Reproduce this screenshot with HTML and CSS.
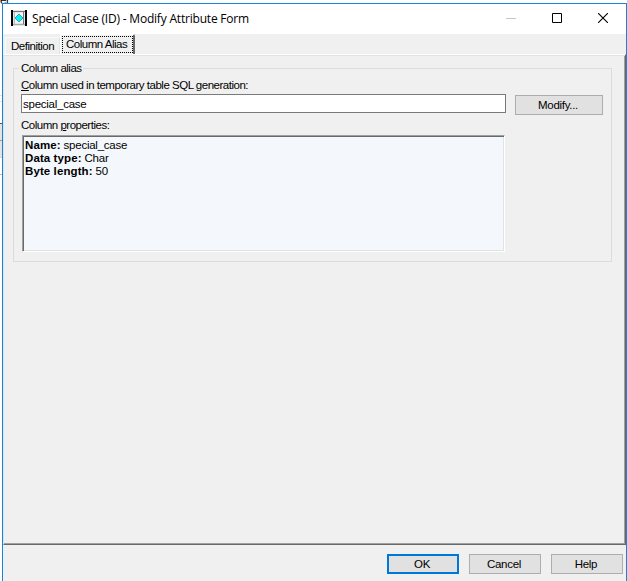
FILE: index.html
```html
<!DOCTYPE html>
<html lang="en">
<head>
<meta charset="utf-8">
<title>Special Case (ID) - Modify Attribute Form</title>
<link rel="stylesheet" href="styles.css">
</head>
<body>
<div class="backdrop"><span class="backdrop-text">er</span></div>
<main class="window">
  <header class="titlebar">
    <svg class="app-icon" width="16" height="16" viewBox="0 0 16 16" shape-rendering="crispEdges">
      <path fill="#e4e4e4" d="M2 0h12v16H2z"/>
      <path fill="#f4f4f4" d="M4 3h8v10H4z"/>
      <path fill="#000" d="M0 0h2v16H0zM14 0h2v16h-2z"/>
      <path fill="#777" d="M2 1h12v1H2zM12 2h1v12h-1z"/>
      <path fill="#aaa" d="M2 14h12v1H2z"/>
      <path fill="#b9c0c0" d="M3 2h1v12H3z"/>
      <path fill="#36a5ab" d="M7 4h2v1h1v1h1v1h1v2h-1v1h-1v1H9v1H7v-1H6v-1H5V9H4V7h1V6h1V5h1z"/>
      <path fill="#00f4ff" d="M7 5h2v1h1v1h1v2h-1v1H9v1H7v-1H6V9H5V7h1V6h1z"/>
    </svg>
    <h1 class="title">Special Case (ID) - Modify Attribute Form</h1>
    <div class="controls">
      <svg width="10" height="10" viewBox="0 0 10 10"><path d="M0 5.5h10" stroke="#c6c6c6"/></svg>
      <svg width="10" height="10" viewBox="0 0 10 10"><path d="M.5.5h9v9h-9z" fill="none" stroke="#000"/></svg>
      <svg width="10" height="10" viewBox="0 0 10 10"><path d="M0 0l10 10M10 0L0 10" fill="none" stroke="#000" stroke-width="1.1"/></svg>
    </div>
  </header>
  <nav class="tabs">
    <div class="tab">Definition</div>
    <div class="tab active"><span class="focus">Column Alias</span></div>
  </nav>
  <section class="panel">
    <div class="group">
      <div class="legend">Column alias</div>
      <label class="label first" for="alias"><u>C</u>olumn used in temporary table SQL generation:</label>
      <div class="row">
        <input id="alias" class="field" value="special_case">
        <button class="button modify">Modify...</button>
      </div>
      <div class="label second">Column <u>p</u>roperties:</div>
      <div class="properties">
        <div><b>Name:</b> special_case</div>
        <div><b>Data type:</b> Char</div>
        <div><b>Byte length:</b> 50</div>
      </div>
    </div>
  </section>
  <footer class="footer">
    <button class="button default">OK</button>
    <button class="button">Cancel</button>
    <button class="button">Help</button>
  </footer>
</main>
</body>
</html>
```
FILE: styles.css
```css
* { box-sizing: border-box; }
body {
  margin: 0;
  width: 627px;
  height: 581px;
  overflow: hidden;
  position: relative;
  padding: 3px 0 0 2px;
  background: #fff;
  color: #000;
  font: 11.5px/13px "Liberation Sans", Arial, sans-serif;
  letter-spacing: -0.49px;
}
.backdrop {
  position: absolute;
  inset: 0;
  background: linear-gradient(#d5e2ef, #d5e2ef) 0 95px / 2px 1px no-repeat,
    linear-gradient(#d5e2ef, #d5e2ef) 0 101px / 2px 1px no-repeat,
    linear-gradient(#555, #555) 0 123px / 2px 1px no-repeat,
    linear-gradient(#999, #999) 0 140px / 2px 1px no-repeat,
    linear-gradient(#c8d8e8, #c8d8e8) 0 157px / 2px 1px no-repeat,
    linear-gradient(#bbb, #bbb) 0 174px / 2px 1px no-repeat,
    linear-gradient(#e4e4e4, #e4e4e4) 0 124px / 2px 33px no-repeat, #fff;
}
.backdrop-text { position: absolute; left: 0; top: -6px; }
.window {
  position: relative;
  display: flex;
  flex-direction: column;
  width: 625px;
  height: 578px;
  border: 1px solid #1883d7;
  border-bottom: 0;
  background: #f0f0f0;
}
.titlebar {
  display: flex;
  align-items: center;
  height: 30px;
  padding: 0 18px 0 8px;
  background: #fff;
}
.app-icon { position: relative; top: -1px; margin-right: 5px; }
.title {
  margin: 0;
  font: 12px/16px "Open Sans", "Noto Sans", sans-serif;
  letter-spacing: -0.2px;
}
.controls { position: relative; top: -1px; display: flex; gap: 36px; margin-left: auto; }
.controls svg { display: block; }
.tabs { display: flex; align-items: flex-end; height: 20px; padding-left: 2px; }
.tab {
  width: 55px;
  height: 17px;
  padding: 2px 0 0 5px;
  border: 1px solid #f9f9f9;
  border-right-color: #e3e3e3;
  border-bottom: 0;
  border-radius: 2px 2px 0 0;
  white-space: nowrap;
}
.tab.active {
  position: relative;
  width: 75px;
  height: 20px;
  padding: 1px 0 0 1px;
  border-color: #fff;
  border-right: 2px solid #696969;
}
.focus { display: block; width: 71px; height: 17px; padding: 1px 0 0 3px; border: 1px dotted #000; }
.panel {
  height: 491px;
  padding: 13px 13px 0 9px;
  border: 1px solid;
  border-color: #fff #696969 #696969 #e3e3e3;
  box-shadow: inset 0 1px #e3e3e3, inset -1px -1px #a0a0a0;
}
.group { height: 194px; padding: 0 8px 0 7px; border: 1px solid #dcdcdc; }
.legend { width: 64px; height: 13px; margin: -7px 0 0 -2px; padding-left: 2px; background: #f0f0f0; white-space: nowrap; }
.label { height: 13px; white-space: nowrap; }
.first { display: block; margin-top: 4px; }
.row { display: flex; margin-top: 2px; gap: 9px; align-items: flex-start; }
.field {
  width: 485px;
  height: 19px;
  padding: 0 0 0 1px;
  border: 1px solid #7a7a7a;
  background: #fff;
  outline: 0;
  font: inherit;
  letter-spacing: -0.25px;
}
.button {
  flex: none;
  width: 72px;
  height: 20px;
  padding: 0 2px 0 0;
  border: 1px solid #adadad;
  background: #e1e1e1;
  color: #000;
  font: inherit;
  letter-spacing: -0.3px;
}
.modify { width: 88px; margin-top: 1px; }
.second { margin-top: 4px; }
.properties {
  width: 483px;
  height: 117px;
  margin: 3px 0 0 1px;
  padding: 3px 2px;
  border: 1px solid;
  border-color: #a0a0a0 #fff #fff #a0a0a0;
  box-shadow: inset 1px 1px #696969, inset -1px -1px #e3e3e3;
  background: #f4f8fd;
  letter-spacing: -0.25px;
}
.properties b { letter-spacing: 0.1px; }
.footer { display: flex; justify-content: flex-end; gap: 10px; padding: 9px 3px 0 0; }
.default { border: 2px solid #0078d7; }
```
